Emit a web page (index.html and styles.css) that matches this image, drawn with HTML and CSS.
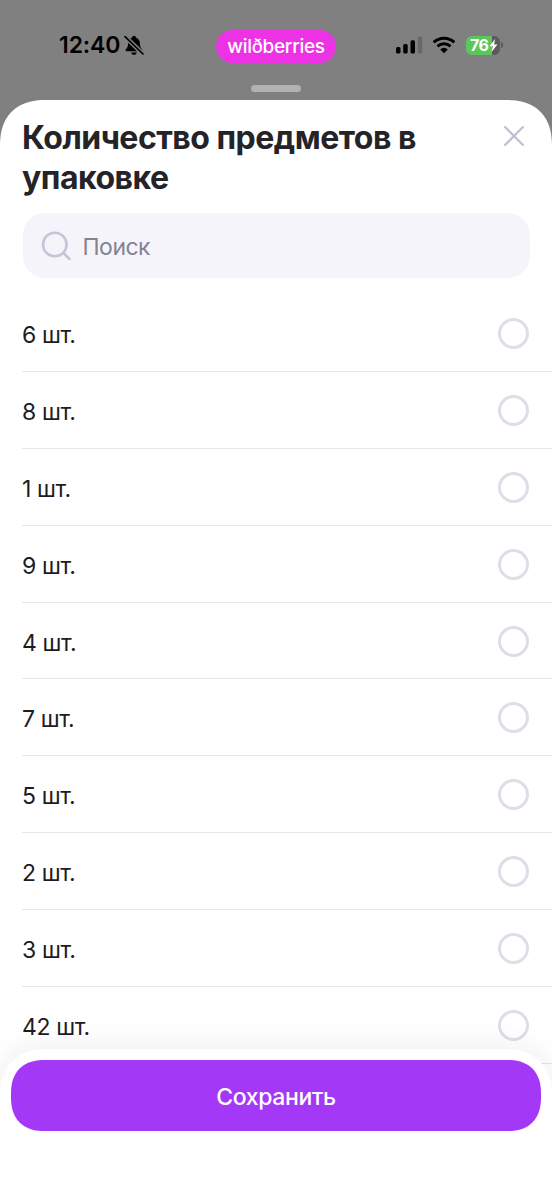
FILE: index.html
```
<!DOCTYPE html>
<html lang="ru">
<head>
<meta charset="utf-8">
<meta name="viewport" content="width=device-width">
<title>Количество предметов в упаковке</title>
<link rel="stylesheet" href="styles.css">
</head>
<body>
<div class="screen">
  <header class="status">
    <div class="status-left">
      <span class="time">12:40</span>
      <svg class="bell" width="20" height="21" viewBox="0 0 20 21">
        <path d="M10 .8c1 0 1.8.7 1.9 1.7 2.500.9 3.900 3 4 5.700.1 3.300.8 4.700 2.200 6.100.8.9.500 2-.8 2H2.700c-1.300 0-1.600-1.100-.8-2C3.300 12.900 4 11.500 4.100 8.200c.1-2.700 1.500-4.800 4-5.700C8.200 1.500 9 .8 10 .8zM7.200 17.500h5.600c-.3 1.500-1.400 2.300-2.800 2.300s-2.500-.8-2.800-2.300z"/>
        <path class="bell-gap" d="M1 1.600 19 19"/>
        <path class="bell-slash" d="M1 1.600 19 19"/>
      </svg>
    </div>
    <div class="brand">wilðberries</div>
    <div class="status-right">
      <svg class="signal" width="28" height="18" viewBox="0 0 28 18">
        <rect x="0" y="11" width="4.500" height="6.500" rx="1.500"/>
        <rect x="7.200" y="8" width="4.500" height="9.500" rx="1.500"/>
        <rect x="14.500" y="4.200" width="4.500" height="13.300" rx="1.500"/>
        <rect class="dim" x="21.700" y="0.500" width="4.500" height="17" rx="1.500"/>
      </svg>
      <svg class="wifi" width="24" height="18" viewBox="0 0 24 18">
        <path class="wave" d="M1.700 6.300a15 15 0 0 1 20.600 0M5.500 10.300a9.400 9.400 0 0 1 13 0"/>
        <path d="M12 17.200 8.200 13.400a5.400 5.400 0 0 1 7.600 0z"/>
      </svg>
      <div class="battery">
        <span>76</span>
        <svg width="9" height="13" viewBox="0 0 9 13"><path d="M6 0 .5 7.200h3.200L2.500 13 8.500 5.400H5.200z"/></svg>
      </div>
      <i class="battery-cap"></i>
    </div>
  </header>
  <div class="grabber"></div>
  <main class="sheet">
    <div class="heading">
      <h1><span>Количество предметов в</span> <span class="second">упаковке</span></h1>
      <svg class="close" width="20" height="20" viewBox="0 0 20 20"><path d="M1 1 19 19M19 1 1 19"/></svg>
    </div>
    <div class="search">
      <svg width="30" height="30" viewBox="0 0 30 30"><circle cx="13.800" cy="13.500" r="11.800"/><path d="M22.500 22l6 6"/></svg>
      <span>Поиск</span>
    </div>
    <ul class="options">
      <li><span>6 шт.</span><i></i></li>
      <li><span>8 шт.</span><i></i></li>
      <li><span>1 шт.</span><i></i></li>
      <li><span>9 шт.</span><i></i></li>
      <li><span>4 шт.</span><i></i></li>
      <li><span>7 шт.</span><i></i></li>
      <li><span>5 шт.</span><i></i></li>
      <li><span>2 шт.</span><i></i></li>
      <li><span>3 шт.</span><i></i></li>
      <li><span>42 шт.</span><i></i></li>
    </ul>
  </main>
  <footer class="actions"><button class="save">Сохранить</button></footer>
</div>
</body>
</html>
```
FILE: styles.css
```
* { box-sizing: border-box; }
body { margin: 0; background: #808080; font-family: Inter, "Liberation Sans", sans-serif; color: #1d1c22; }
.screen { position: relative; width: 552px; height: 1200px; overflow: hidden; background: #808080; }
svg { display: block; flex: none; }

.status { display: grid; grid-template-columns: 216px 120px 216px; height: 85px; padding-top: 30px; }
.status-left { display: flex; align-items: center; height: 30px; padding-left: 59px; color: #000; }
.time { width: 65px; font-size: 23px; font-weight: 600; line-height: 30px; letter-spacing: -0.1px; white-space: nowrap; }
.bell-gap { stroke: #808080; stroke-width: 4.500; }
.bell-slash { stroke: #000; stroke-width: 1.700; stroke-linecap: round; }
.brand { height: 33px; padding-top: 1px; border-radius: 17px; background: #ed31e4; color: #fff; font: 500 19px/32px Inter, sans-serif; letter-spacing: -0.3px; text-align: center; white-space: nowrap; }
.status-right { display: flex; align-items: center; height: 30px; padding-left: 60px; }
.dim { fill: #686868; }
.wifi { margin-left: 8px; }
.wave { fill: none; stroke: #000; stroke-width: 3; }
.battery { display: flex; align-items: center; width: 34px; height: 19px; margin-left: 10px; padding-left: 4px; border-radius: 6px; background: linear-gradient(90deg, #5cc55c 26px, #5b5b5b 26px); color: #fff; font-size: 16px; font-weight: 700; line-height: 19px; letter-spacing: -0.5px; }
.battery svg { fill: #fff; margin-left: 1px; }
.battery-cap { width: 2px; height: 6px; margin-left: 1px; border-radius: 0 2px 2px 0; background: #5b5b5b; }

.grabber { width: 50px; height: 7px; margin: 0 auto; border-radius: 4px; background: #b2b2b2; }
.sheet { height: 1100px; margin-top: 8px; padding-top: 17px; border-radius: 46px 46px 0 0; corner-shape: superellipse(1.25); background: #fff; }
.heading { display: flex; justify-content: space-between; height: 96px; padding: 0 28.500px 0 22px; }
h1 { margin: 0; padding-top: 1px; color: #242328; font-size: 32px; line-height: 40px; font-weight: 700; letter-spacing: -0.5px; white-space: nowrap; }
h1 span { display: block; }
.close { margin-top: 9px; fill: none; stroke: #c3c1d3; stroke-width: 2.300; stroke-linecap: round; }
.search { display: flex; align-items: center; height: 65px; margin: 0 22px 0 23px; padding-left: 17.500px; border-radius: 22px; background: #f5f4fa; color: #858391; font-size: 23px; letter-spacing: -0.5px; }
.search span { padding-top: 2px; }
.search svg { margin-right: 12px; fill: none; stroke: #c6c4d6; stroke-width: 2.600; stroke-linecap: round; }
.options { list-style: none; margin: 17px 0 0 22px; padding: 0; }
.options li { display: flex; justify-content: space-between; align-items: center; height: 76.900px; padding: 1px 23px 0 0; border-bottom: 1.500px solid #e6e5eb; font-size: 23px; line-height: 30px; letter-spacing: -0.4px; }
.options span { padding-top: 3px; }
.options i { width: 31px; height: 31px; border: 3px solid #dfdee8; border-radius: 50%; }

.actions { position: absolute; left: 0; right: 0; bottom: 0; height: 151px; padding: 11px; border-radius: 42px 42px 0 0; background: #fff; box-shadow: 0 -4px 28px rgba(40, 35, 75, 0.07); }
.save { display: block; width: 530px; height: 71px; padding: 2px 0 0; border: 0; border-radius: 34px; corner-shape: superellipse(1.25); background: #a438f7; color: #fff; font: 500 23px/30px Inter, sans-serif; letter-spacing: -0.35px; }
```
